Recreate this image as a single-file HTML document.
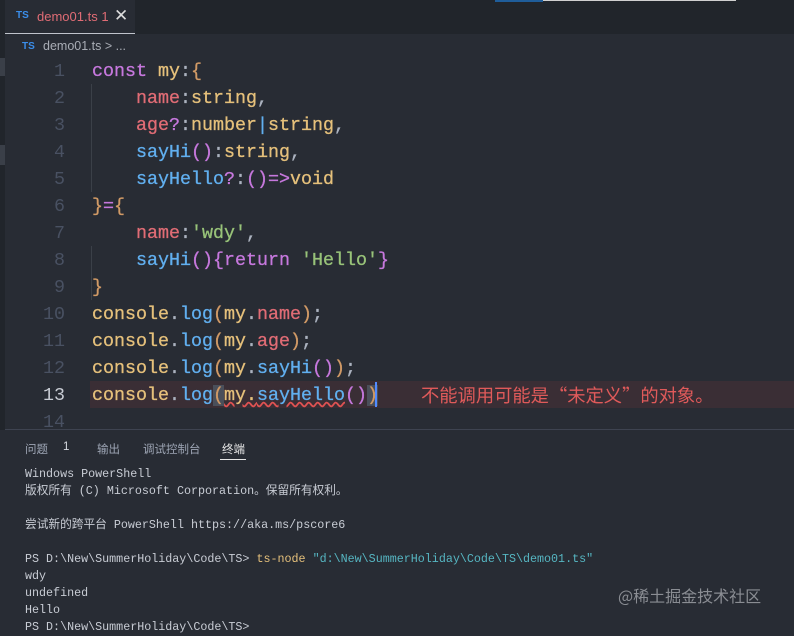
<!DOCTYPE html>
<html><head><meta charset="utf-8"><style>
body{margin:0;width:794px;height:625px;overflow:hidden;background:#282c34;position:relative;font-family:"Liberation Sans","Noto Sans CJK SC",sans-serif}
.abs{position:absolute}
.code{position:absolute;left:0;font-family:"Liberation Mono","Noto Sans CJK SC",monospace;font-size:18.33px;white-space:pre;line-height:27px;color:#abb2bf;-webkit-text-stroke:0.3px currentColor}
.ln{position:absolute;width:65px;text-align:right;color:#495162;font-family:"Liberation Mono",monospace;font-size:18.33px;line-height:27px}
.k{color:#c678dd}.y{color:#e5c07b}.r{color:#e06c75}.b{color:#61afef}.g{color:#98c379}.o{color:#d19a66}.p{color:#c678dd}.w{color:#abb2bf}
.term{position:absolute;left:25px;font-family:"Liberation Mono","Noto Sans CJK SC",monospace;font-size:11.7px;color:#c8ccd4;white-space:pre;line-height:17px}
</style></head><body>
<div class="abs" style="left:0;top:0;width:794px;height:34px;background:#21252b"></div>
<div class="abs" style="left:5px;top:0;width:130px;height:34px;background:#282c34"></div>
<div class="abs" style="left:5px;top:33px;width:130px;height:1px;background:#c0c4cc"></div>
<div class="abs" style="left:495px;top:0;width:48px;height:2px;background:#1f5d9a"></div>
<div class="abs" style="left:543px;top:0;width:193px;height:1px;background:#d0d0d0"></div>
<div class="abs" style="left:16px;top:10px;font-size:10px;font-weight:bold;color:#3b8eea">TS</div>
<div class="abs" style="left:37px;top:9px;font-size:13px;color:#e06c75">demo01.ts 1</div>
<div class="abs" style="left:114px;top:6px;font-size:17px;color:#ddd">✕</div>
<div class="abs" style="left:22px;top:41px;font-size:10px;font-weight:bold;color:#3b8eea">TS</div>
<div class="abs" style="left:43px;top:39px;font-size:12.5px;color:#a9adb5">demo01.ts &gt; ...</div>
<div class="abs" style="left:0;top:34px;width:5px;height:396px;background:#21252b"></div>
<div class="abs" style="left:0;top:58px;width:5px;height:18px;background:#3a3f48"></div>
<div class="abs" style="left:0;top:145px;width:5px;height:20px;background:#3a3f48"></div>
<div class="abs" style="left:90px;top:381px;width:704px;height:27px;background:#3a2e35"></div>
<div class="abs" style="left:91px;top:84px;width:1px;height:108px;background:#3b4048"></div>
<div class="abs" style="left:91px;top:246px;width:1px;height:54px;background:#3b4048"></div>
<div class="ln" style="top:58px;left:0;line-height:27px">1<br>2<br>3<br>4<br>5<br>6<br>7<br>8<br>9<br>10<br>11<br>12<br><span style="color:#c8ccd4">13</span><br>14</div>
<div class="code" style="left:92px;top:58px"><span class="k">const</span> <span class="y">my</span>:<span class="o">{</span>
    <span class="r">name</span>:<span class="y">string</span>,
    <span class="r">age</span><span class="k">?</span>:<span class="y">number</span><span class="b">|</span><span class="y">string</span>,
    <span class="b">sayHi</span><span class="p">()</span>:<span class="y">string</span>,
    <span class="b">sayHello</span><span class="k">?</span>:<span class="p">()</span><span class="k">=&gt;</span><span class="y">void</span>
<span class="o">}</span><span class="k">=</span><span class="o">{</span>
    <span class="r">name</span>:<span class="g">'wdy'</span>,
    <span class="b">sayHi</span><span class="p">()</span><span class="p">{</span><span class="k">return</span> <span class="g">'Hello'</span><span class="p">}</span>
<span class="o">}</span>
<span class="y">console</span>.<span class="b">log</span><span class="o">(</span><span class="y">my</span>.<span class="r">name</span><span class="o">)</span>;
<span class="y">console</span>.<span class="b">log</span><span class="o">(</span><span class="y">my</span>.<span class="r">age</span><span class="o">)</span>;
<span class="y">console</span>.<span class="b">log</span><span class="o">(</span><span class="y">my</span>.<span class="b">sayHi</span><span class="p">()</span><span class="o">)</span>;
<span class="y">console</span>.<span class="b">log</span><span class="o" style="background:#4a4f5a">(</span><span class="y" style="text-decoration:underline wavy #e05252">my.</span><span class="b" style="text-decoration:underline wavy #e05252">sayHello</span><span class="p">()</span><span class="o" style="background:#4a4f5a">)</span></div>
<div class="abs" style="left:375px;top:382px;width:2px;height:25px;background:#528bff"></div>
<div class="abs" style="left:421px;top:382px;font-family:'Noto Sans CJK SC',sans-serif;font-size:18.3px;line-height:27px;color:#e05a5a">不能调用可能是“未定义”的对象。</div>
<div class="abs" style="left:5px;top:429px;width:789px;height:196px;background:#282c34;border-top:1px solid #3e4350"></div>
<div class="abs" style="left:25px;top:441px;font-size:11.5px;color:#9da5b4">问题</div>
<div class="abs" style="left:63px;top:441px;font-size:11.5px;color:#d7dae0">1</div>
<div class="abs" style="left:97px;top:441px;font-size:11.5px;color:#9da5b4">输出</div>
<div class="abs" style="left:143px;top:441px;font-size:11.5px;color:#9da5b4">调试控制台</div>
<div class="abs" style="left:222px;top:441px;font-size:11.5px;color:#e6e6e6">终端</div>
<div class="abs" style="left:220px;top:459px;width:26px;height:1px;background:#e6e6e6"></div>
<div class="term" style="top:466px">Windows PowerShell
版权所有 (C) Microsoft Corporation。保留所有权利。

尝试新的跨平台 PowerShell https://aka.ms/pscore6

PS D:\New\SummerHoliday\Code\TS&gt; <span style="color:#e5c07b">ts-node</span> <span style="color:#56b6c2">"d:\New\SummerHoliday\Code\TS\demo01.ts"</span>
wdy
undefined
Hello
PS D:\New\SummerHoliday\Code\TS&gt;</div>
<div class="abs" style="left:618px;top:583px;font-family:'Noto Sans CJK SC',sans-serif;font-size:16px;color:#8a8d93">@稀土掘金技术社区</div>
</body></html>
